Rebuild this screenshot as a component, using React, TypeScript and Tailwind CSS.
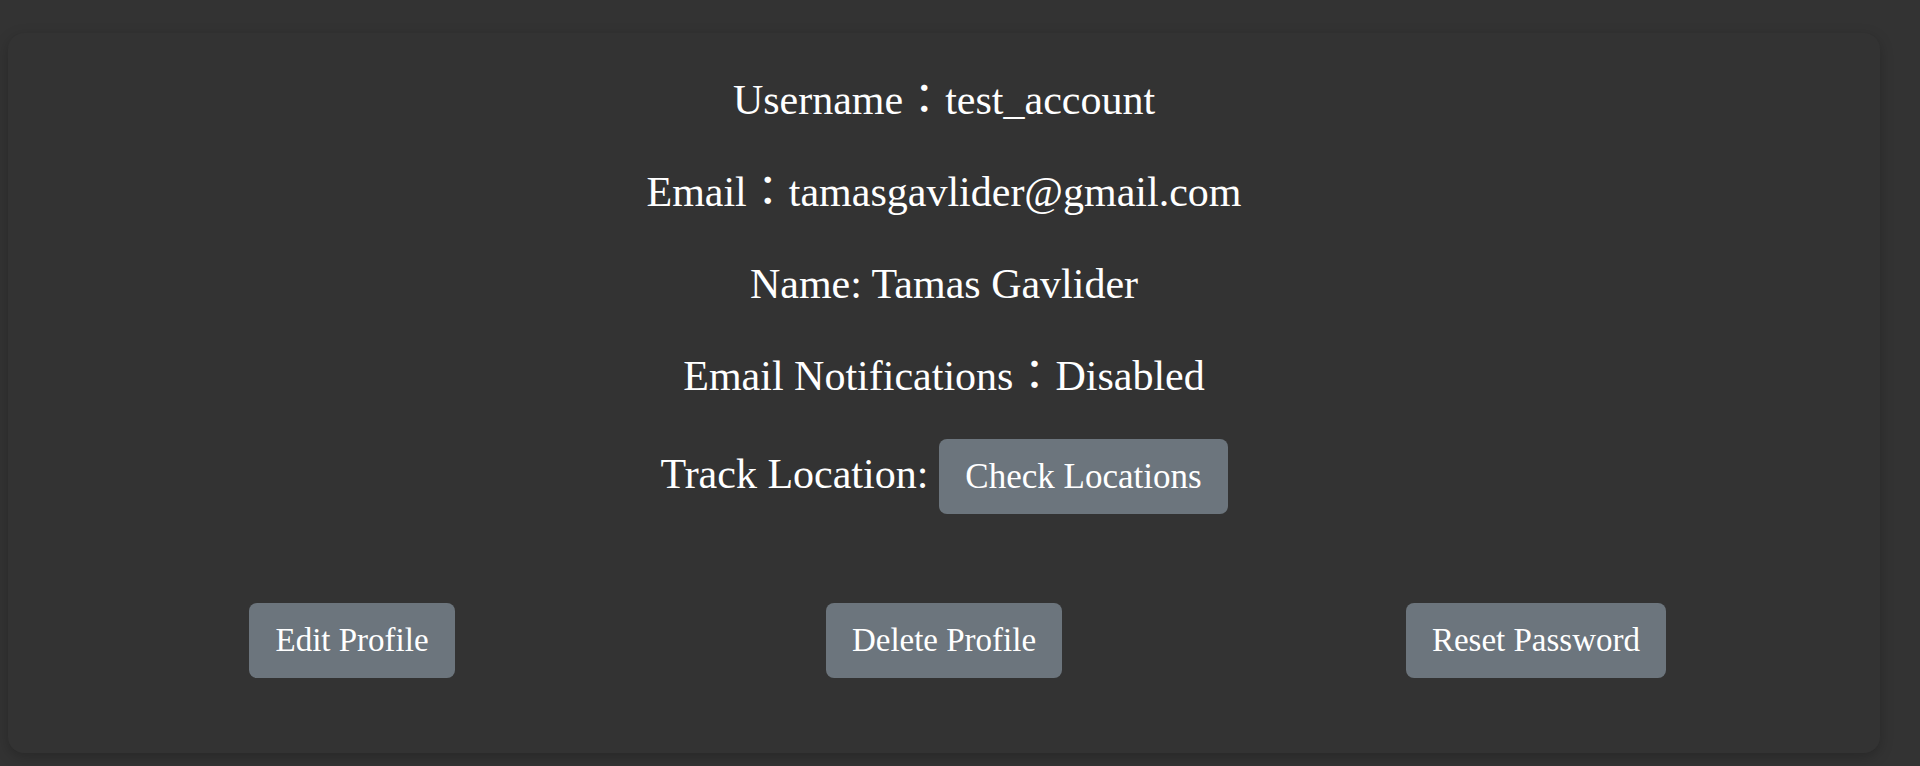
import React from 'react'

const serif = 'font-["Liberation_Serif","Noto_Sans_CJK_JP",serif]'

function GrayButton({ label, size = 'text-[33px]' }: { label: string; size?: string }) {
  return (
    <button
      type="button"
      className={`inline-flex h-[75px] items-center rounded-lg bg-[#6c757d] px-[26px] leading-none text-white ${size}`}
    >
      {label}
    </button>
  )
}

export default function App() {
  return (
    <div className={`min-h-screen bg-[#333333] pt-[33px] pl-2 text-white ${serif}`}>
      {/* Profile card */}
      <div className="w-[1872px] rounded-2xl bg-[#333333] pt-[44px] pb-[75px] shadow-[0_4px_14px_rgba(0,0,0,0.22)]">
        <div className="flex flex-col items-center gap-[46px] text-[42px] leading-[46px]">
          <p>Username：test_account</p>
          <p>Email：tamasgavlider@gmail.com</p>
          <p>Name: Tamas Gavlider</p>
          <p>Email Notifications：Disabled</p>
        </div>

        <div className="mt-[40px] flex items-baseline justify-center gap-[11px] text-[42px] leading-[46px]">
          <span>Track Location:</span>
          <GrayButton label="Check Locations" size="text-[35px]" />
        </div>

        {/* Actions */}
        <div className="mt-[89px] grid grid-cols-3 px-12">
          <div className="flex justify-center">
            <GrayButton label="Edit Profile" />
          </div>
          <div className="flex justify-center">
            <GrayButton label="Delete Profile" />
          </div>
          <div className="flex justify-center">
            <GrayButton label="Reset Password" />
          </div>
        </div>
      </div>
    </div>
  )
}
